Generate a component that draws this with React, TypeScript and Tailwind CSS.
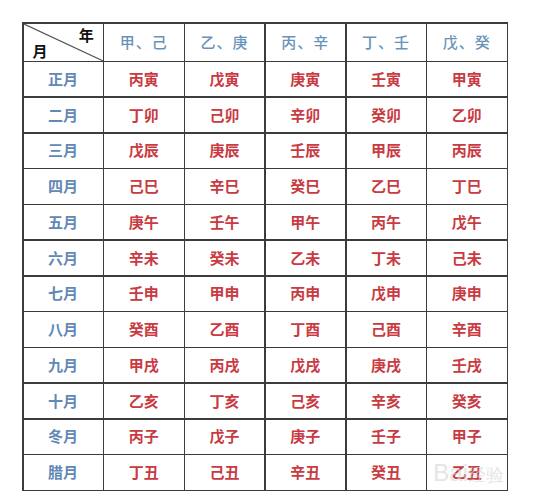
import React from "react";

const HEAD = ["甲、己", "乙、庚", "丙、辛", "丁、壬", "戊、癸"];

const ROWS: [string, string[]][] = [
  ["正月", ["丙寅", "戊寅", "庚寅", "壬寅", "甲寅"]],
  ["二月", ["丁卯", "己卯", "辛卯", "癸卯", "乙卯"]],
  ["三月", ["戊辰", "庚辰", "壬辰", "甲辰", "丙辰"]],
  ["四月", ["己巳", "辛巳", "癸巳", "乙巳", "丁巳"]],
  ["五月", ["庚午", "壬午", "甲午", "丙午", "戊午"]],
  ["六月", ["辛未", "癸未", "乙未", "丁未", "己未"]],
  ["七月", ["壬申", "甲申", "丙申", "戊申", "庚申"]],
  ["八月", ["癸酉", "乙酉", "丁酉", "己酉", "辛酉"]],
  ["九月", ["甲戌", "丙戌", "戊戌", "庚戌", "壬戌"]],
  ["十月", ["乙亥", "丁亥", "己亥", "辛亥", "癸亥"]],
  ["冬月", ["丙子", "戊子", "庚子", "壬子", "甲子"]],
  ["腊月", ["丁丑", "己丑", "辛丑", "癸丑", "乙丑"]],
];

export default function App() {
  return (
    <div
      className="w-[547px] h-[500px] bg-white pl-[22px] pt-[22px]"
      style={{ fontFamily: '"Noto Sans CJK SC", "Noto Sans", sans-serif' }}
    >
      <div className="relative w-[486px]">
        <div className="grid w-[486px] h-[469px] grid-cols-6 grid-rows-[37px_repeat(12,1fr)] gap-[1.5px] bg-[#3c3c3c] p-[1.5px]">
          <div className="relative flex items-start justify-between bg-white px-[9px] pt-[3px] pb-[3px]">
            <svg className="absolute inset-0 h-full w-full" viewBox="0 0 100 100" preserveAspectRatio="none">
              <line x1="0" y1="0" x2="100" y2="100" stroke="#555" strokeWidth="1.2" vectorEffect="non-scaling-stroke" />
            </svg>
            <span className="self-end text-[15px] font-bold leading-none text-[#111]">月</span>
            <span className="text-[15px] font-bold leading-none text-[#111]">年</span>
          </div>
          {HEAD.map((h) => (
            <div key={h} className="flex items-center justify-center bg-white text-[15px] font-medium tracking-[1px] text-[#6a93ba]">
              {h}
            </div>
          ))}
          {ROWS.map(([m, cells]) => (
            <React.Fragment key={m}>
              <div className="flex items-center justify-center bg-white text-[15px] font-semibold text-[#6288b6]">{m}</div>
              {cells.map((c, i) => (
                <div key={i} className="flex items-center justify-center bg-white text-[15px] font-semibold text-[#c93a42]">
                  {c}
                </div>
              ))}
            </React.Fragment>
          ))}
        </div>
        <div
          className="pointer-events-none absolute right-[4px] bottom-[6px] text-[24px] leading-none text-[#d4d4d4] opacity-60"
          style={{ fontFamily: '"Liberation Sans", sans-serif' }}
        >
          Bai<span className="text-[18px]">经验</span>
        </div>
      </div>
    </div>
  );
}
